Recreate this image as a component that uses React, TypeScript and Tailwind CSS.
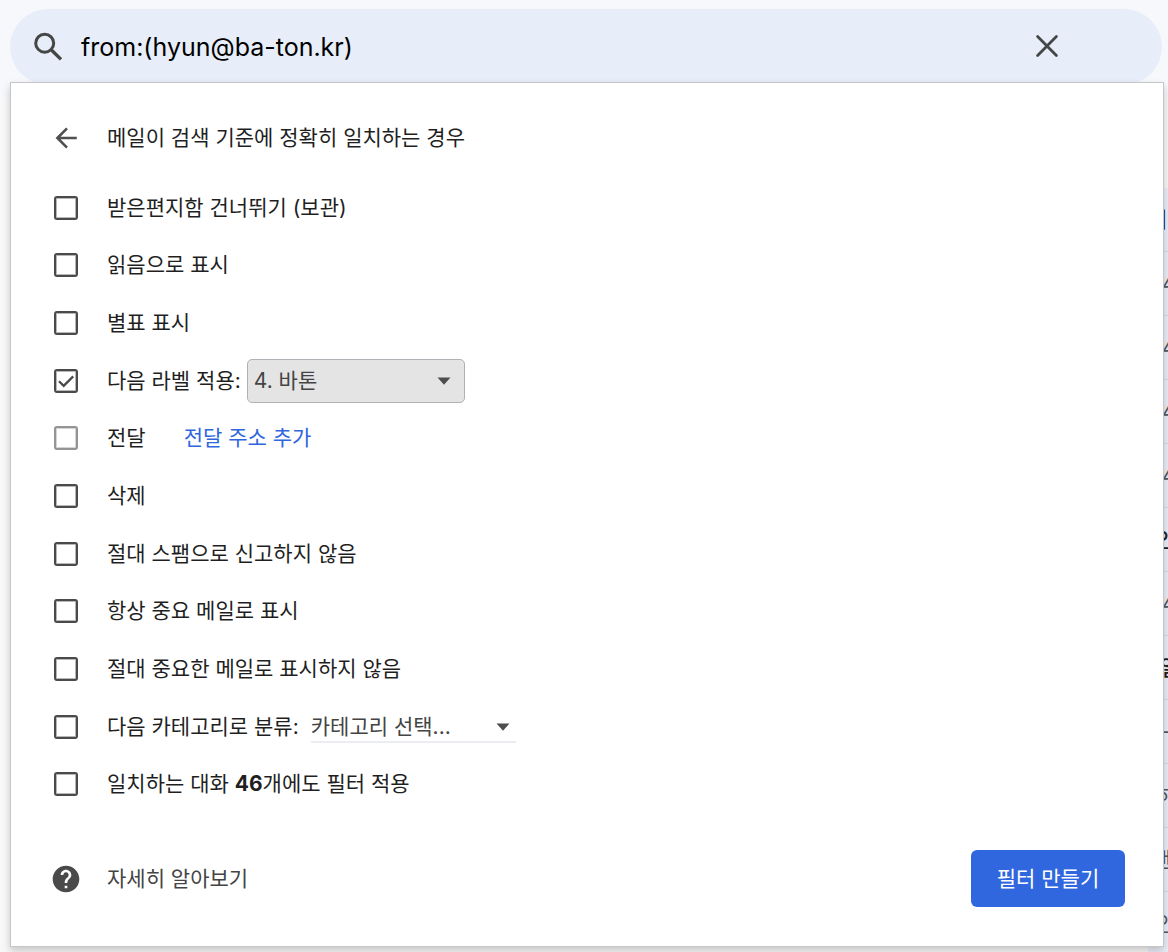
import * as React from "react";
import { MdHelp } from "react-icons/md";

interface FilterOption {
  id: string;
  label: React.ReactNode;
  checked?: boolean;
  disabled?: boolean;
  extra?: React.ReactNode;
}

interface MailRow {
  sender: string;
  indent: string;
  unread?: boolean;
}

const mailRows: MailRow[] = [
  { sender: "이", indent: "pl-0", unread: true },
  { sender: "4", indent: "pl-3.5" },
  { sender: "4", indent: "pl-3.5" },
  { sender: "4", indent: "pl-3.5" },
  { sender: "4", indent: "pl-3.5" },
  { sender: "안", indent: "pl-2", unread: true },
  { sender: "4", indent: "pl-3.5" },
  { sender: "열", indent: "pl-3", unread: true },
  { sender: "-", indent: "pl-3.5" },
  { sender: "하", indent: "pl-2" },
  { sender: "앤", indent: "pl-1" },
  { sender: "안", indent: "pl-2" },
];

function SearchIcon() {
  return (
    <svg viewBox="0 0 32 32" className="size-8" fill="none" stroke="#444746" strokeWidth="3">
      <circle cx="12.7" cy="12.2" r="9" />
      <path d="M19.2 18.7 29 28.4" strokeWidth="3.4" />
    </svg>
  );
}

function CloseIcon() {
  return (
    <svg viewBox="0 0 32 32" className="size-8" fill="none" stroke="#444746" strokeWidth="2.8" strokeLinecap="round">
      <path d="M6.6 5.6 25.4 24.4M25.4 5.6 6.6 24.4" />
    </svg>
  );
}

function BackIcon() {
  return (
    <svg viewBox="0 0 24 24" className="size-6" fill="none" stroke="#505050" strokeWidth="2.6">
      <path d="M22.8 12H4M13 2.4 3.4 12l9.6 9.6" />
    </svg>
  );
}

function Caret({ className }: { className: string }) {
  return (
    <svg
      viewBox="0 0 14 8"
      className={`pointer-events-none absolute top-1/2 h-2 w-3.5 -translate-y-1/2 ${className}`}
      fill="#4d4d4d"
    >
      <path d="M.5.5h13L7 7.8z" />
    </svg>
  );
}

function Checkbox({ id, checked, disabled }: { id: string; checked?: boolean; disabled?: boolean }) {
  return (
    <span className="relative flex size-6 shrink-0">
      <input
        id={id}
        type="checkbox"
        defaultChecked={checked}
        disabled={disabled}
        className="peer size-6 appearance-none rounded-[3px] border-2 border-[#4a4a4a] bg-white shadow-[inset_0_0_0_1px_rgba(74,74,74,0.4)] disabled:border-[#949494] disabled:shadow-[inset_0_0_0_1px_rgba(148,148,148,0.4)]"
      />
      <svg
        viewBox="0 0 24 24"
        className="pointer-events-none absolute inset-0 hidden size-6 peer-checked:block"
        fill="none"
        stroke="#4a4a4a"
        strokeWidth="2.3"
      >
        <path d="m5 12.2 4.7 4.7L19.2 7.4" />
      </svg>
    </span>
  );
}

const options: FilterOption[] = [
  { id: "skip-inbox", label: "받은편지함 건너뛰기 (보관)" },
  { id: "mark-read", label: "읽음으로 표시" },
  { id: "star", label: "별표 표시" },
  {
    id: "apply-label",
    label: "다음 라벨 적용:",
    checked: true,
    extra: (
      <span className="relative ml-1.5">
        <select
          aria-label="라벨"
          className="block h-11 w-[218px] appearance-none rounded-[5px] border border-[#b0b1b6] bg-[#e4e4e4] pl-1.5 text-[#444444]"
        >
          <option>4. 바톤</option>
        </select>
        <Caret className="right-3.5" />
      </span>
    ),
  },
  {
    id: "forward",
    label: "전달",
    disabled: true,
    extra: (
      <a href="#forwarding" className="ml-[38px] text-[#2f66dd]">
        전달 주소 추가
      </a>
    ),
  },
  { id: "delete", label: "삭제" },
  { id: "never-spam", label: "절대 스팸으로 신고하지 않음" },
  { id: "always-important", label: "항상 중요 메일로 표시" },
  { id: "never-important", label: "절대 중요한 메일로 표시하지 않음" },
  {
    id: "categorize",
    label: "다음 카테고리로 분류:",
    extra: (
      <span className="relative ml-3">
        <select
          aria-label="카테고리"
          className="block h-8 w-[205px] appearance-none border-b-2 border-[#ececf3] bg-white text-[#444444]"
        >
          <option>카테고리 선택...</option>
        </select>
        <Caret className="right-1.5" />
      </span>
    ),
  },
  {
    id: "apply-existing",
    label: (
      <>
        일치하는 대화 <b>46</b>개에도 필터 적용
      </>
    ),
  },
];

function MailList() {
  return (
    <div aria-hidden="true" className="absolute inset-x-0 top-[98px] bottom-0 overflow-hidden bg-[#f8f8f9] pt-[90px]">
      <ul className="ml-auto w-5 bg-[#eaeef8]">
        {mailRows.map((row, index) => (
          <li
            key={index}
            className={`flex h-16 items-center overflow-hidden border-b border-[#d5d9e2] whitespace-nowrap ${row.indent} ${
              row.unread ? "font-medium text-[#1f1f1f]" : "text-[#55585c]"
            }`}
          >
            {row.sender}
          </li>
        ))}
      </ul>
    </div>
  );
}

export default function App() {
  return (
    <div className="relative min-h-screen overflow-hidden bg-[#f6f8fc] pt-[9px] pr-1 pb-[5px] pl-2.5 font-['Inter','Noto_Sans_CJK_KR',sans-serif] text-[21px] leading-8 text-[#1f1f1f]">
      <MailList />

      <form role="search" className="relative mr-0.5 flex h-[76px] items-center rounded-full bg-[#e7edf9] pr-[99px] pl-[22px]">
        <button type="submit" aria-label="검색">
          <SearchIcon />
        </button>
        <input
          type="text"
          aria-label="메일 검색"
          defaultValue="from:(hyun@ba-ton.kr)"
          className="ml-[17px] min-w-0 flex-1 bg-transparent text-[25px] text-black outline-none"
        />
        <button type="button" aria-label="검색 지우기">
          <CloseIcon />
        </button>
      </form>

      <section className="relative -mt-[3px] border border-[#c6c6c8] bg-white pt-[23px] pr-[38px] pb-[39px] pl-[43px] shadow-[0_4px_8px_rgba(0,0,0,0.2)]">
        <header className="flex h-16 items-center gap-[29px]">
          <button type="button" aria-label="뒤로">
            <BackIcon />
          </button>
          <h1>메일이 검색 기준에 정확히 일치하는 경우</h1>
        </header>

        <ul className="mt-[9px] grid h-[634px] auto-rows-fr">
          {options.map((option) => (
            <li key={option.id} className="flex items-center">
              <Checkbox id={option.id} checked={option.checked} disabled={option.disabled} />
              <label htmlFor={option.id} className="ml-[29px]">
                {option.label}
              </label>
              {option.extra}
            </li>
          ))}
        </ul>

        <footer className="mt-[37px] flex items-center justify-between">
          <a href="#help" className="-ml-1 flex items-center gap-[25px] text-[#444444]">
            <MdHelp className="size-8 text-[#4a4a4a]" />
            자세히 알아보기
          </a>
          <button type="button" className="h-[57px] w-[154px] rounded-md bg-[#3067de] text-white">
            필터 만들기
          </button>
        </footer>
      </section>
    </div>
  );
}
